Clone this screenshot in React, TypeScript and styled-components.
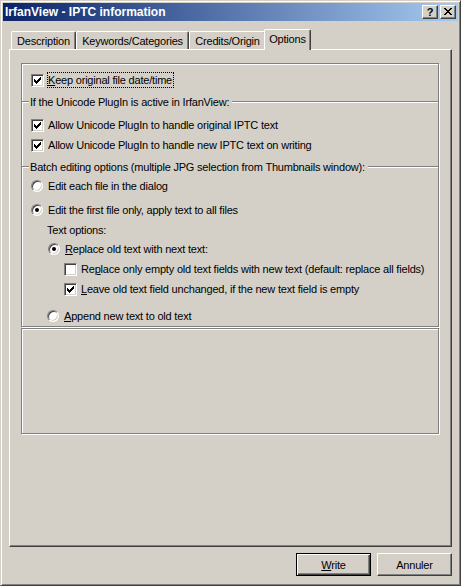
import React from "react";
import styled, { createGlobalStyle } from "styled-components";

const Global = createGlobalStyle`
  html, body { margin: 0; padding: 0; background: #D4D0C8; }
  body {
    font-family: "Liberation Sans", Arial, sans-serif;
    font-size: 11px;
    letter-spacing: -0.2px;
    color: #000;
  }
  * { box-sizing: border-box; }
`;

const Window = styled.div`
  width: 461px;
  height: 586px;
  background: #d4d0c8;
  border: 1px solid;
  border-color: #d4d0c8 #404040 #404040 #d4d0c8;
  box-shadow: inset 1px 1px 0 #fff, inset -1px -1px 0 #808080;
  padding: 2px;
  display: flex;
  flex-direction: column;
`;

const TitleBar = styled.div`
  height: 18px;
  flex: none;
  display: flex;
  align-items: center;
  padding: 0 2px;
  background: linear-gradient(to right, #0a246a, #a6caf0);
  color: #fff;
  font-weight: bold;
  font-size: 12px;
  letter-spacing: 0;
`;

const TitleText = styled.span`
  line-height: 18px;
  white-space: nowrap;
`;

const TitleButtons = styled.div`
  margin-left: auto;
  display: flex;
  gap: 2px;
`;

const CaptionButton = styled.div`
  width: 16px;
  height: 14px;
  background: #d4d0c8;
  border: 1px solid;
  border-color: #fff #404040 #404040 #fff;
  box-shadow: inset -1px -1px 0 #808080;
  display: flex;
  align-items: center;
  justify-content: center;
  color: #000;
  font-size: 11px;
  font-weight: bold;
  line-height: 12px;
  padding-bottom: 1px;
`;

const Body = styled.div`
  flex: 1;
  display: flex;
  flex-direction: column;
  padding: 8px 6px 0;
`;

const TabStrip = styled.div`
  height: 20px;
  display: flex;
  align-items: flex-end;
  padding-left: 2px;
`;

const Tab = styled.div<{ $w: number; $active?: boolean }>`
  width: ${(p) => p.$w}px;
  height: ${(p) => (p.$active ? 21 : 18)}px;
  margin: ${(p) => (p.$active ? "0 -2px -1px" : "0")};
  position: relative;
  z-index: ${(p) => (p.$active ? 2 : 1)};
  background: #d4d0c8;
  border-top: 1px solid #fff;
  border-left: 1px solid #fff;
  border-right: 1px solid #404040;
  border-radius: 2px 2px 0 0;
  box-shadow: inset -1px 0 0 #808080;
  display: flex;
  align-items: center;
  justify-content: center;
  padding-bottom: ${(p) => (p.$active ? 2 : 0)}px;
  white-space: nowrap;
`;

const Panel = styled.div`
  height: 498px;
  border: 1px solid;
  border-color: #fff #404040 #404040 #fff;
  box-shadow: inset -1px -1px 0 #808080;
  padding: 13px 12px 0 11px;
  display: flex;
  flex-direction: column;
`;

const GroupStack = styled.div`
  height: 264px;
  border: 1px solid #808080;
  box-shadow: inset 1px 1px 0 #fff, 1px 1px 0 #fff;
  display: flex;
  flex-direction: column;
`;

const EmptyBox = styled.div`
  margin-top: 1px;
  height: 106px;
  border: 1px solid #808080;
  box-shadow: inset 1px 1px 0 #fff, 1px 1px 0 #fff;
`;

const Header = styled.div<{ $mt: number }>`
  height: 16px;
  margin-top: ${(p) => p.$mt}px;
  display: flex;
  align-items: center;
  line-height: 16px;
`;

const Etch = styled.div<{ $w?: number }>`
  height: 2px;
  border-top: 1px solid #808080;
  border-bottom: 1px solid #fff;
  ${(p) => (p.$w ? `width: ${p.$w}px; flex: none;` : "flex: 1;")}
`;

const HeaderLabel = styled.span`
  padding: 0 3px 0 1px;
  white-space: nowrap;
`;

const Row = styled.div<{ $h?: number; $mt?: number; $indent: number }>`
  height: ${(p) => p.$h ?? 20}px;
  margin-top: ${(p) => p.$mt ?? 0}px;
  padding-left: ${(p) => p.$indent}px;
  display: flex;
  align-items: center;
  gap: 4px;
  line-height: 14px;
  white-space: nowrap;
`;

const Box = styled.span`
  width: 13px;
  height: 13px;
  flex: none;
  background: #fff;
  border: 1px solid;
  border-color: #808080 #fff #fff #808080;
  box-shadow: inset 1px 1px 0 #404040, inset -1px -1px 0 #d4d0c8;
  display: flex;
  align-items: center;
  justify-content: center;
`;

const RadioSlot = styled.span`
  width: 13px;
  height: 12px;
  flex: none;
  display: flex;
`;

const RadioCircle = styled.span`
  width: 12px;
  height: 12px;
  border-radius: 50%;
  background: #fff;
  border: 1px solid;
  border-color: #808080 #fff #fff #808080;
  box-shadow: inset 1px 1px 0 #404040, inset -1px -1px 0 #d4d0c8;
  display: flex;
  align-items: center;
  justify-content: center;
`;

const Dot = styled.span`
  width: 4px;
  height: 4px;
  border-radius: 50%;
  background: #000;
`;

const FocusLabel = styled.span`
  margin-left: -1px;
  border: 1px dotted #000;
  line-height: 14px;
  padding: 0 1px 0 0;
`;

const Plain = styled.span``;

const ButtonRow = styled.div`
  margin-top: 6px;
  display: flex;
  justify-content: flex-end;
  gap: 6px;
`;

const Button = styled.div<{ $default?: boolean }>`
  width: 75px;
  height: 23px;
  background: #d4d0c8;
  display: flex;
  align-items: center;
  justify-content: center;
  border: 1px solid;
  border-color: ${(p) => (p.$default ? "#000" : "#fff #404040 #404040 #fff")};
  box-shadow: ${(p) =>
    p.$default
      ? "inset 1px 1px 0 #fff, inset -1px -1px 0 #404040, inset -2px -2px 0 #808080"
      : "inset -1px -1px 0 #808080"};
`;

const CheckMark = () => (
  <svg width="7" height="7" viewBox="0 0 7 7" shapeRendering="crispEdges">
    <path
      fill="#000"
      d="M6 0h1v1h-1z M5 1h2v1h-2z M0 2h1v1h-1z M4 2h3v1h-3z M0 3h2v1h-2z M3 3h3v1h-3z M0 4h5v1h-5z M1 5h3v1h-3z M2 6h1v1h-1z"
    />
  </svg>
);

const CloseGlyph = () => (
  <svg width="8" height="7" viewBox="0 0 8 7" shapeRendering="crispEdges">
    <path
      fill="#000"
      d="M0 0h2v1h-2z M6 0h2v1h-2z M1 1h2v1h-2z M5 1h2v1h-2z M2 2h4v1h-4z M3 3h2v1h-2z M2 4h4v1h-4z M1 5h2v1h-2z M5 5h2v1h-2z M0 6h2v1h-2z M6 6h2v1h-2z"
    />
  </svg>
);

const Check = ({ on }: { on?: boolean }) => <Box>{on && <CheckMark />}</Box>;

const Radio = ({ on }: { on?: boolean }) => (
  <RadioSlot>
    <RadioCircle>{on && <Dot />}</RadioCircle>
  </RadioSlot>
);

export default function App() {
  return (
    <>
      <Global />
      <Window>
        <TitleBar>
          <TitleText>IrfanView - IPTC information</TitleText>
          <TitleButtons>
            <CaptionButton>?</CaptionButton>
            <CaptionButton>
              <CloseGlyph />
            </CaptionButton>
          </TitleButtons>
        </TitleBar>
        <Body>
          <TabStrip>
            <Tab $w={65}>Description</Tab>
            <Tab $w={113}>Keywords/Categories</Tab>
            <Tab $w={77}>Credits/Origin</Tab>
            <Tab $w={47} $active>
              Options
            </Tab>
          </TabStrip>
          <Panel>
            <GroupStack>
              <Row $mt={6} $indent={9}>
                <Check on />
                <FocusLabel>
                  <u>K</u>eep original file date/time
                </FocusLabel>
              </Row>
              <Header $mt={4}>
                <Etch $w={7} />
                <HeaderLabel>If the Unicode PlugIn is active in IrfanView:</HeaderLabel>
                <Etch />
              </Header>
              <Row $mt={5} $indent={9}>
                <Check on />
                <Plain>Allow Unicode PlugIn to handle original IPTC text</Plain>
              </Row>
              <Row $indent={9}>
                <Check on />
                <Plain>Allow Unicode PlugIn to handle new IPTC text on writing</Plain>
              </Row>
              <Header $mt={4}>
                <Etch $w={7} />
                <HeaderLabel>
                  Batch editing options (multiple JPG selection from Thumbnails window):
                </HeaderLabel>
                <Etch />
              </Header>
              <Row $mt={1} $indent={9}>
                <Radio />
                <Plain>Edit each file in the dialog</Plain>
              </Row>
              <Row $mt={4} $indent={9}>
                <Radio on />
                <Plain>Edit the first file only, apply text to all files</Plain>
              </Row>
              <Row $h={19} $indent={25}>
                <Plain>Text options:</Plain>
              </Row>
              <Row $indent={26}>
                <Radio on />
                <Plain>
                  <u>R</u>eplace old text with next text:
                </Plain>
              </Row>
              <Row $indent={42}>
                <Check />
                <Plain>
                  Re<u>p</u>lace only empty old text fields with new text (default: replace all
                  fields)
                </Plain>
              </Row>
              <Row $indent={42}>
                <Check on />
                <Plain>
                  <u>L</u>eave old text field unchanged, if the new text field is empty
                </Plain>
              </Row>
              <Row $mt={7} $indent={25}>
                <Radio />
                <Plain>
                  <u>A</u>ppend new text to old text
                </Plain>
              </Row>
            </GroupStack>
            <EmptyBox />
          </Panel>
          <ButtonRow>
            <Button $default>
              <span>
                <u>W</u>rite
              </span>
            </Button>
            <Button>Annuler</Button>
          </ButtonRow>
        </Body>
      </Window>
    </>
  );
}
